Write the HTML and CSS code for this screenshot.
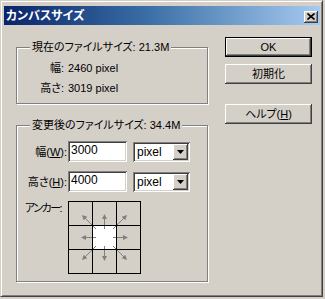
FILE: index.html
```html
<!DOCTYPE html>
<html lang="ja">
<head>
<meta charset="utf-8">
<title>カンバスサイズ</title>
<link rel="stylesheet" href="styles.css">
</head>
<body>
<div class="window">
  <div class="titlebar">
    <span class="title">カンバスサイズ</span>
    <span class="close"><svg width="8" height="7" viewBox="0 0 8 7"><path d="M0.5 0.5 L7.5 6.5 M7.5 0.5 L0.5 6.5" stroke="#000" stroke-width="1.6" fill="none"/></svg></span>
  </div>
  <div class="content">
    <div class="left">
      <fieldset class="group g1">
        <legend>現在のファイルサイズ: 21.3M</legend>
        <div class="info">
          <span class="lbl">幅:</span><span>2460 pixel</span>
          <span class="lbl">高さ:</span><span>3019 pixel</span>
        </div>
      </fieldset>
      <fieldset class="group g2">
        <legend>変更後のファイルサイズ: 34.4M</legend>
        <div class="form">
          <span class="lbl">幅(<u>W</u>):</span>
          <div class="input">3000</div>
          <div class="select"><span class="val">pixel</span><span class="drop"><svg width="7" height="4" viewBox="0 0 7 4"><path d="M0 0 H7 L3.5 4 Z" fill="#000"/></svg></span></div>
          <span class="lbl">高さ(<u>H</u>):</span>
          <div class="input">4000</div>
          <div class="select"><span class="val">pixel</span><span class="drop"><svg width="7" height="4" viewBox="0 0 7 4"><path d="M0 0 H7 L3.5 4 Z" fill="#000"/></svg></span></div>
        </div>
        <div class="anchor-row">
          <span class="anchor-lbl">アンカー:</span>
          <div class="grid">
            <div class="cell"><svg viewBox="0 0 23 23"><path d="M23 23 L15.5 15.5" class="ln"/><polygon points="13,13 18.3,14.7 14.7,18.3" class="hd"/></svg></div>
            <div class="cell"><svg viewBox="0 0 23 23"><path d="M11.5 23 V16" class="ln"/><polygon points="11.5,12 9,17 14,17" class="hd"/></svg></div>
            <div class="cell"><svg viewBox="0 0 23 23"><path d="M0 23 L7.5 15.5" class="ln"/><polygon points="10,13 8.3,18.3 4.7,14.7" class="hd"/></svg></div>
            <div class="cell"><svg viewBox="0 0 23 23"><path d="M23 11.5 H16" class="ln"/><polygon points="12,11.5 17,9 17,14" class="hd"/></svg></div>
            <div class="cell center"><svg viewBox="0 0 23 23"><path d="M0 0 L3 3 M23 0 L20 3 M0 23 L3 20 M23 23 L20 20 M11.5 0 V3 M11.5 23 V20 M0 11.5 H3 M23 11.5 H20" class="ln"/></svg></div>
            <div class="cell"><svg viewBox="0 0 23 23"><path d="M0 11.5 H7" class="ln"/><polygon points="11,11.5 6,9 6,14" class="hd"/></svg></div>
            <div class="cell"><svg viewBox="0 0 23 23"><path d="M23 0 L15.5 7.5" class="ln"/><polygon points="13,10 18.3,8.3 14.7,4.7" class="hd"/></svg></div>
            <div class="cell"><svg viewBox="0 0 23 23"><path d="M11.5 0 V7" class="ln"/><polygon points="11.5,11 9,6 14,6" class="hd"/></svg></div>
            <div class="cell"><svg viewBox="0 0 23 23"><path d="M0 0 L7.5 7.5" class="ln"/><polygon points="10,10 8.3,4.7 4.7,8.3" class="hd"/></svg></div>
          </div>
        </div>
      </fieldset>
    </div>
    <div class="buttons">
      <div class="btn default"><span class="face">OK</span></div>
      <div class="btn">初期化</div>
      <div class="btn help">ヘルプ(<u>H</u>)</div>
    </div>
  </div>
</div>
</body>
</html>
```
FILE: styles.css
```css
* { box-sizing: border-box; }
html, body { margin: 0; padding: 0; }
body {
  width: 325px;
  height: 299px;
  overflow: hidden;
  background: #d4d0c8;
  font-family: "Liberation Sans", "Noto Sans CJK JP", sans-serif;
  font-size: 11px;
  color: #000;
  font-feature-settings: "palt";
}
.window {
  width: 323px;
  height: 297px;
  border: 1px solid;
  border-color: #d4d0c8 #404040 #404040 #d4d0c8;
  box-shadow: inset 1px 1px #fff, inset -1px -1px #808080;
  padding: 5px 2px 0 3px;
  display: flex;
  flex-direction: column;
}
.titlebar {
  height: 19px;
  flex-shrink: 0;
  background: linear-gradient(to right, #0a246a, #3a6ea5 45%, #a6caf0);
  display: flex;
  align-items: center;
  justify-content: space-between;
  padding: 0 2px 0 2px;
}
.title {
  color: #fff;
  font-weight: bold;
  font-size: 12px;
  line-height: 18px;
  height: 18px;
  overflow: hidden;
}
.close {
  width: 14px;
  height: 12px;
  margin-top: 2px;
  background: #d4d0c8;
  box-shadow: inset -1px -1px #404040, inset 1px 1px #fff, inset -2px -2px #808080;
  display: flex;
  align-items: center;
  justify-content: center;
  padding-bottom: 1px;
}
.close svg { display: block; }
.content {
  display: flex;
  padding: 12px 0 0 12px;
}
.left { width: 192px; margin-top: 3px; }
.group {
  margin: 0;
  border: 1px solid #808080;
  box-shadow: inset 1px 1px #fff, 1px 1px #fff;
  min-width: 0;
  width: 192px;
}
.group legend {
  margin-left: 13px;
  padding: 0 2px;
  line-height: 14px;
  height: 14px;
  white-space: nowrap;
  background: #d4d0c8;
}
.g1 { padding: 7px 0 8px 0; }
.g2 { margin-top: 14px; padding: 9px 0 7px 0; }
.info {
  display: grid;
  grid-template-columns: 47px auto;
  grid-auto-rows: 14px;
  column-gap: 4px;
  row-gap: 6px;
  line-height: 14px;
}
.info span { height: 14px; white-space: nowrap; }
.lbl { text-align: right; white-space: nowrap; }
.form {
  display: grid;
  grid-template-columns: 51px 59px 63px;
  grid-auto-rows: 21px;
  row-gap: 9px;
  align-items: center;
}
.form .lbl { padding-right: 1px; line-height: 14px; height: 14px; }
.input, .select {
  height: 21px;
  background: #fff;
  box-shadow: inset 1px 1px #808080, inset -1px -1px #fff, inset 2px 2px #404040, inset -2px -2px #d4d0c8;
  font-size: 12px;
  line-height: 17px;
  padding: 1px 3px 0 3px;
  overflow: hidden;
}
.select {
  margin-left: 6px;
  height: 20px;
  display: flex;
  justify-content: space-between;
  padding: 2px 2px 2px 4px;
  align-self: end;
}
.select .val { line-height: 16px; height: 16px; }
.drop {
  width: 15px;
  height: 16px;
  background: #d4d0c8;
  box-shadow: inset -1px -1px #404040, inset 1px 1px #fff, inset -2px -2px #808080;
  display: flex;
  align-items: center;
  justify-content: center;
}
.drop svg { display: block; }
.anchor-row {
  display: flex;
  margin-top: 9px;
  height: 73px;
}
.anchor-lbl {
  width: 51px;
  flex-shrink: 0;
  padding-left: 8px;
  line-height: 14px;
  height: 14px;
  white-space: nowrap;
  letter-spacing: -1.5px;
}
.grid {
  display: grid;
  grid-template-columns: repeat(3, 23px);
  grid-auto-rows: 23px;
  gap: 1px;
  padding: 1px;
  background: #000;
  width: 73px;
  height: 73px;
  flex-shrink: 0;
}
.cell { background: #d4d0c8; }
.cell.center { background: #fff; }
.cell svg { display: block; width: 23px; height: 23px; }
.ln { stroke: #808080; stroke-width: 1; fill: none; }
.hd { fill: #808080; }
.buttons {
  margin-left: 17px;
  display: flex;
  flex-direction: column;
}
.btn {
  width: 87px;
  height: 20px;
  display: flex;
  align-items: center;
  justify-content: center;
  box-shadow: inset -1px -1px #404040, inset 1px 1px #fff, inset -2px -2px #808080;
  line-height: 14px;
  white-space: nowrap;
}
.btn.default {
  border: 1px solid #000;
  box-shadow: none;
  padding: 0;
}
.btn.default .face {
  width: 100%;
  height: 100%;
  display: flex;
  align-items: center;
  justify-content: center;
  box-shadow: inset -1px -1px #404040, inset 1px 1px #fff, inset -2px -2px #808080;
}
.btn + .btn { margin-top: 7px; }
.btn.help { margin-top: 20px; }
```
